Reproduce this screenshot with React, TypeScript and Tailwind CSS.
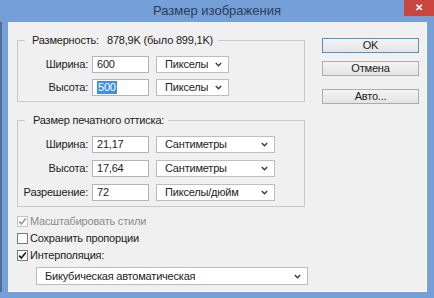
import React from 'react';

const font = { fontFamily: '"Liberation Sans", Arial, sans-serif' };

const Chevron = () => (
    <svg width="7" height="5" viewBox="0 0 7 5" className="shrink-0">
        <path d="M0.8 1 L3.5 3.8 L6.2 1" fill="none" stroke="#3a3a3a" strokeWidth="1.3" />
    </svg>
);

const Dropdown: React.FC<{ value: string; width: string }> = ({ value, width }) => (
    <div className={`${width} h-[17px] ml-[7px] bg-white border border-[#bdbdbd] flex items-center justify-between pl-[8px] pr-[6px]`}>
        <span className="leading-none">{value}</span>
        <Chevron />
    </div>
);

const Field: React.FC<{ label: string; value: string; unit: string; unitWidth: string; selected?: boolean }> = ({ label, value, unit, unitWidth, selected }) => (
    <div className="flex items-center h-[17px]">
        <div className="w-[70px] text-right leading-none">{label}</div>
        <div className="w-[57px] h-[17px] ml-[4px] bg-white border border-[#b4b4b4] flex items-center pl-[4px]">
            {selected ? (
                <span className="bg-[#3f8fe6] text-white leading-[13px] px-[1px]">{value}</span>
            ) : (
                <span className="leading-none">{value}</span>
            )}
        </div>
        <Dropdown value={unit} width={unitWidth} />
    </div>
);

const Check: React.FC<{ checked?: boolean; disabled?: boolean; label: string }> = ({ checked, disabled, label }) => (
    <div className={`flex items-center h-[17px] ${disabled ? 'text-[#8c8c8c]' : ''}`}>
        <div className={`w-[11px] h-[11px] bg-white border flex items-center justify-center ${disabled ? 'border-[#c4c4c4]' : 'border-[#7a7a7a]'}`}>
            {checked && (
                <svg width="9" height="9" viewBox="0 0 9 9">
                    <path d="M1.2 4.6 L3.4 7 L7.8 1.6" fill="none" stroke={disabled ? '#9a9a9a' : '#1a1a1a'} strokeWidth="1.6" />
                </svg>
            )}
        </div>
        <span className="ml-[2px] leading-none">{label}</span>
    </div>
);

const Button: React.FC<{ label: string; primary?: boolean; className?: string }> = ({ label, primary, className }) => (
    <div className={`w-[97px] h-[15px] flex items-center justify-center border bg-gradient-to-b from-[#f4f4f4] to-[#e3e3e3] leading-none ${primary ? 'border-[#4f93c9]' : 'border-[#acacac]'} ${className ?? ''}`}>
        {label}
    </div>
);

export default function App() {
    return (
        <div style={font} className="w-[434px] h-[298px] bg-[#759fd7] flex flex-col overflow-hidden text-[11px] tracking-[-0.2px] text-[#222]">
            {/* Title bar */}
            <div className="h-[22px] flex items-start shrink-0">
                <div className="flex-1 h-[22px] flex items-center justify-center pl-[30px] text-[13px] tracking-normal text-[#2c3d57]">
                    Размер изображения
                </div>
                <div className="w-[30px] h-[16px] bg-[#c9463e] flex items-center justify-center text-white text-[10px] font-bold leading-none">
                    ✕
                </div>
            </div>

            {/* Body */}
            <div className="flex-1 flex pb-[6px]">
                <div className="w-[2px] bg-[#4e6f98]" />
                <div className="flex-1 ml-[6px] mr-[7px] bg-[#f0f0f0] border-r border-b border-[#fbfbfb] flex pl-[9px] pr-[7px]">
                    {/* Left column */}
                    <div className="w-[288px] flex flex-col pt-[11px]">
                        <fieldset className="border border-[#c8c8c8] px-0 pt-[9px] pb-[5px]">
                            <legend className="ml-[7px] pl-[7px] pr-[5px] leading-[14px]">
                                <span className="inline-block w-[75px]">Размерность:</span>
                                <span>878,9K (было 899,1K)</span>
                            </legend>
                            <div className="flex flex-col gap-[6px]">
                                <Field label="Ширина:" value="600" unit="Пикселы" unitWidth="w-[73px]" />
                                <Field label="Высота:" value="500" unit="Пикселы" unitWidth="w-[73px]" selected />
                            </div>
                        </fieldset>

                        <fieldset className="mt-[11px] border border-[#c8c8c8] px-0 pt-[9px] pb-[5px]">
                            <legend className="ml-[7px] pl-[8px] pr-[4px] leading-[14px]">Размер печатного оттиска:</legend>
                            <div className="flex flex-col gap-[7px]">
                                <Field label="Ширина:" value="21,17" unit="Сантиметры" unitWidth="w-[119px]" />
                                <Field label="Высота:" value="17,64" unit="Сантиметры" unitWidth="w-[119px]" />
                                <Field label="Разрешение:" value="72" unit="Пикселы/дюйм" unitWidth="w-[119px]" />
                            </div>
                        </fieldset>

                        <div className="mt-[6px] flex flex-col">
                            <Check checked disabled label="Масштабировать стили" />
                            <Check label="Сохранить пропорции" />
                            <Check checked label="Интерполяция:" />
                        </div>

                        <div className="mt-[3px] ml-[19px] w-[272px] h-[18px] bg-white border border-[#bdbdbd] flex items-center justify-between pl-[8px] pr-[6px]">
                            <span className="leading-none">Бикубическая автоматическая</span>
                            <Chevron />
                        </div>
                    </div>

                    {/* Right column */}
                    <div className="ml-[17px] flex flex-col pt-[16px]">
                        <Button label="OK" primary />
                        <Button label="Отмена" className="mt-[8px]" />
                        <Button label="Авто..." className="mt-[13px]" />
                    </div>
                </div>
            </div>
        </div>
    );
}
